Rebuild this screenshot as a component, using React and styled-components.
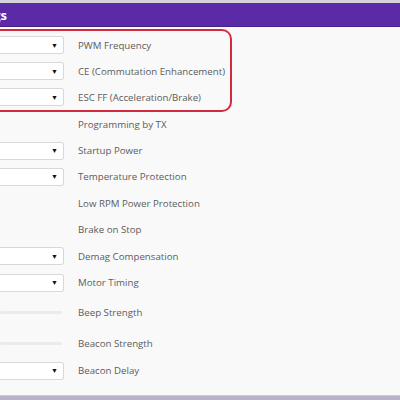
import React from "react"
import styled, { createGlobalStyle } from "styled-components"

const GlobalStyle = createGlobalStyle`
  html, body {
    margin: 0;
    padding: 0;
    background: #f9f9f9;
    font-family: "Open Sans", "Liberation Sans", sans-serif;
  }
`

const Page = styled.div`
  display: flex;
  flex-direction: column;
  height: 400px;
  overflow: hidden;
`
const TopStrip = styled.div`
  height: 3px;
  background: #d6d2dc;
`
const Header = styled.div`
  display: flex;
  align-items: center;
  height: 23px;
  background: #5a2aa7;
  border-bottom: 1px solid #47208a;
`
const Title = styled.div`
  display: flex;
  justify-content: flex-end;
  width: 7px;
  white-space: nowrap;
  color: #fff;
  font-weight: 700;
  font-size: 13px;
`
const Content = styled.div`
  flex: 1;
  display: flex;
  flex-direction: column;
  padding-top: 2px;
`
const Highlight = styled.div`
  width: 230px;
  border: 2px solid #d22a3e;
  border-left: none;
  border-radius: 0 10px 10px 0;
  padding-top: 1px;
  margin-bottom: -1px;
`
const Row = styled.div`
  display: grid;
  grid-template-columns: 64px 1fr;
  column-gap: 14px;
  align-items: center;
  height: ${p => p.$h || 26}px;
`
const Select = styled.div`
  display: flex;
  align-items: center;
  justify-content: flex-end;
  height: 16px;
  background: #fff;
  border: 1px solid #d8d8d8;
  border-left: none;
  border-radius: 0 3px 3px 0;
  padding-right: 5px;
  font-size: 7px;
  color: #111;
`
const Slider = styled.div`
  height: 3px;
  margin-right: 2px;
  background: #ebebeb;
  border-radius: 2px;
`
const Label = styled.span`
  font-size: 9.7px;
  color: #5c5c5c;
  white-space: nowrap;
`
const Footer = styled.div`
  height: 4px;
  background: #b8b1c8;
  border-top: 1px solid #cfc9da;
`

const Setting = ({ label, type, h }) => (
  <Row $h={h}>
    <div>
      {type === "select" && <Select>▼</Select>}
      {type === "slider" && <Slider />}
    </div>
    <Label>{label}</Label>
  </Row>
)

const highlighted = ["PWM Frequency", "CE (Commutation Enhancement)", "ESC FF (Acceleration/Brake)"]

const rest = [
  { label: "Programming by TX", h: 26.4 },
  { label: "Startup Power", type: "select", h: 26.4 },
  { label: "Temperature Protection", type: "select", h: 26.4 },
  { label: "Low RPM Power Protection", h: 26.4 },
  { label: "Brake on Stop", h: 26.4 },
  { label: "Demag Compensation", type: "select", h: 26.4 },
  { label: "Motor Timing", type: "select", h: 26.6 },
  { label: "Beep Strength", type: "slider", h: 33.5 },
  { label: "Beacon Strength", type: "slider", h: 28.5 },
  { label: "Beacon Delay", type: "select" },
]

export default function App() {
  return (
    <Page>
      <GlobalStyle />
      <TopStrip />
      <Header>
        <Title>Common Settings</Title>
      </Header>
      <Content>
        <Highlight>
          {highlighted.map(l => (
            <Setting key={l} label={l} type="select" />
          ))}
        </Highlight>
        {rest.map(s => (
          <Setting key={s.label} {...s} />
        ))}
      </Content>
      <Footer />
    </Page>
  )
}
